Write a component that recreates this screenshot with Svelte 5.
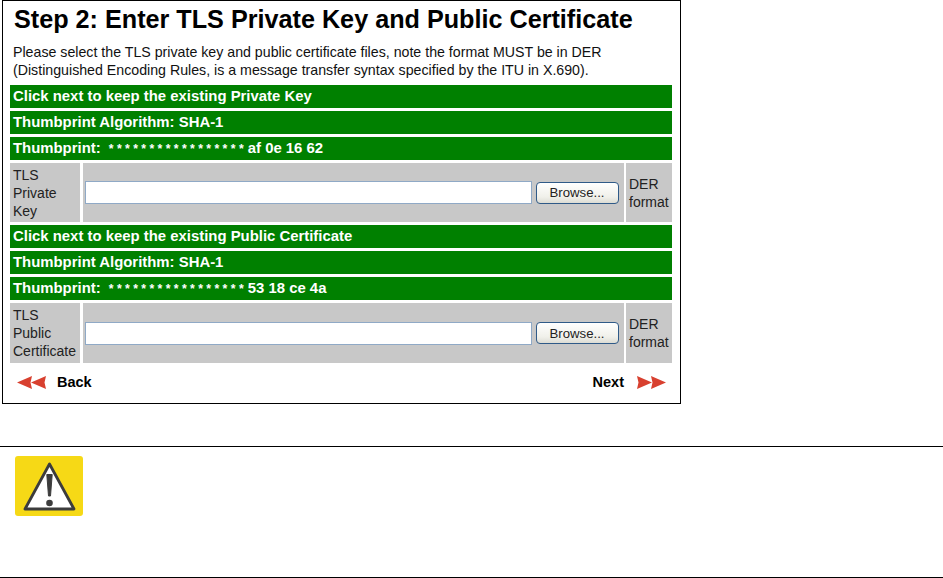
<script lang="ts">
	// Wizard step for uploading the TLS key and certificate, with a caution block below
	const sections = [
		{
			keep: 'Click next to keep the existing Private Key',
			thumbprint: 'af 0e 16 62',
			label: ['TLS', 'Private', 'Key']
		},
		{
			keep: 'Click next to keep the existing Public Certificate',
			thumbprint: '53 18 ce 4a',
			label: ['TLS', 'Public', 'Certificate']
		}
	];
	const mask = Array(17).fill('*').join(' ');
</script>

<div class="page">
	<div class="frame">
		<h1>Step 2: Enter TLS Private Key and Public Certificate</h1>
		<p class="intro">
			Please select the TLS private key and public certificate files, note the format MUST be in DER<br />
			(Distinguished Encoding Rules, is a message transfer syntax specified by the ITU in X.690).
		</p>

		<div class="rows">
			{#each sections as s}
				<div class="banner">{s.keep}</div>
				<div class="banner">Thumbprint Algorithm: SHA-1</div>
				<div class="banner">Thumbprint: <span class="mask">{mask}</span> {s.thumbprint}</div>
				<div class="file-row">
					<div class="cell label">
						{#each s.label as line}<span>{line}</span>{/each}
					</div>
					<div class="cell picker">
						<div class="path"></div>
						<button type="button" class="browse">Browse...</button>
					</div>
					<div class="cell label"><span>DER</span><span>format</span></div>
				</div>
			{/each}
		</div>

		<div class="nav">
			<div class="nav-item">
				<svg width="30" height="13" viewBox="0 0 30 13">
					<path d="M0 6.5 15 0 13.500 6.5 15 13Z M14 6.5 29 0 27.500 6.5 29 13Z" fill="#d8402f" />
				</svg>
				<span>Back</span>
			</div>
			<div class="nav-item next">
				<span>Next</span>
				<svg width="30" height="13" viewBox="0 0 30 13">
					<path d="M30 6.5 15 0 16.500 6.5 15 13Z M16 6.5 1 0 2.500 6.5 1 13Z" fill="#d8402f" />
				</svg>
			</div>
		</div>
	</div>

	<div class="caution">
		<svg class="warn" width="68" height="60" viewBox="0 0 68 60">
			<rect width="68" height="60" rx="3" fill="#f6d916" />
			<path d="M34.500 8 10 53H59Z" fill="#fff" stroke="#3c3c3c" stroke-width="2.800" stroke-linejoin="round" />
			<path d="M31.800 18.500h5.400L35.500 40h-2Z" fill="#3c3c3c" stroke="#3c3c3c" stroke-width="1" stroke-linejoin="round" />
			<circle cx="34.500" cy="47" r="3.300" fill="#3c3c3c" />
		</svg>
	</div>
</div>

<style>
	:global(body) {
		margin: 0;
		background: #fff;
		overflow: hidden;
	}

	.page {
		width: 943px;
		height: 578px;
		font-family: 'Liberation Sans', Arial, sans-serif;
		color: #000;
	}

	.frame {
		box-sizing: border-box;
		width: 679px;
		height: 404px;
		margin-left: 2px;
		padding: 0 8px 0 7px;
		border: 1px solid #000;
	}

	h1 {
		margin: 0;
		padding: 3px 0 0 4px;
		font-size: 25.200px;
		line-height: 30px;
		font-weight: bold;
		white-space: nowrap;
	}

	.intro {
		margin: 9px 0 0 3px;
		font-size: 14.200px;
		line-height: 18px;
		color: #111;
		white-space: nowrap;
	}

	.rows {
		display: flex;
		flex-direction: column;
		gap: 3px;
		margin-top: 6px;
	}

	.banner {
		height: 23px;
		padding-left: 3px;
		background: #008000;
		color: #fff;
		font-size: 14.900px;
		font-weight: bold;
		line-height: 22px;
		white-space: nowrap;
	}

	.mask {
		margin-left: 4px;
		font-size: 12.200px;
	}

	.file-row {
		display: grid;
		grid-template-columns: 70px 1fr 46px;
		column-gap: 2.500px;
		height: 59px;
	}

	.file-row:last-child {
		height: 60px;
	}

	.cell {
		background: #c8c8c8;
	}

	.label {
		display: flex;
		flex-direction: column;
		justify-content: center;
		padding-left: 3px;
		font-size: 14px;
		line-height: 18px;
		color: #222;
		white-space: nowrap;
	}

	.picker {
		display: flex;
		align-items: center;
		padding-left: 2px;
		gap: 4px;
	}

	.path {
		box-sizing: border-box;
		width: 447px;
		height: 23px;
		background: #fff;
		border: 1px solid #8fa9c6;
	}

	.browse {
		box-sizing: border-box;
		width: 83px;
		height: 22px;
		padding: 0;
		border: 1px solid #2f5a88;
		border-radius: 4px;
		background: linear-gradient(#fff, #f0f0ea 70%, #dcdcd4);
		font-family: inherit;
		font-size: 13.200px;
		color: #222;
	}

	.nav {
		display: flex;
		justify-content: space-between;
		align-items: center;
		padding: 11px 6px 0 7px;
	}

	.nav-item {
		display: flex;
		align-items: center;
		gap: 10px;
		font-size: 14.500px;
		font-weight: bold;
	}

	.next {
		gap: 12px;
	}

	.caution {
		box-sizing: border-box;
		height: 132px;
		margin-top: 42px;
		padding: 9px 0 0 15px;
		border-top: 1px solid #000;
		border-bottom: 1px solid #000;
	}

	.warn {
		display: block;
	}
</style>
